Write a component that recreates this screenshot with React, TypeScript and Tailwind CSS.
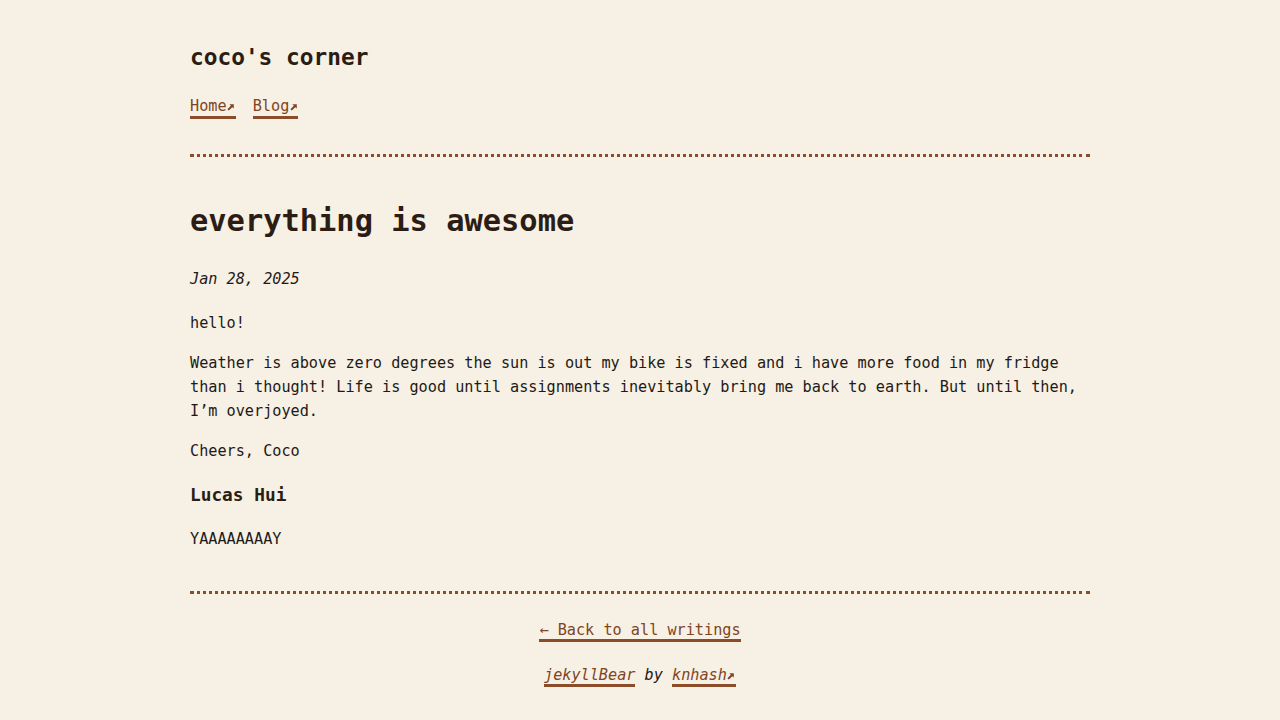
import type { ReactNode } from "react";

const mono = "font-['DejaVu_Sans_Mono','Liberation_Mono',monospace]";

function Arrow() {
  // small north-east arrow, sized to one character cell
  return (
    <span className="inline-block w-[1ch] text-center align-baseline">
      <svg viewBox="0 0 10 10" className="inline-block h-[8px] w-[8px]" fill="currentColor">
        <path d="M3 1.5h5.5V7L6.6 5.2 2.3 9.5 0.5 7.7 4.8 3.4z" />
      </svg>
    </span>
  );
}

function Link({
  children,
  external,
  italic,
  className = "",
}: {
  children: ReactNode;
  external?: boolean;
  italic?: boolean;
  className?: string;
}) {
  return (
    <a
      href="#"
      className={`border-b-[3px] border-[#8b4c2a] text-[#7e4523] no-underline ${italic ? "italic" : ""} ${className}`}
    >
      {children}
      {external ? <Arrow /> : null}
    </a>
  );
}

export default function App() {
  return (
    <div className={`min-h-screen bg-[#f7f0e4] text-[15.2px] leading-[24px] text-[#1d1a17] ${mono}`}>
      <div className="mx-auto w-[900px] pt-[44px] pb-[30px]">
        {/* header */}
        <header>
          <h1 className="text-[22.8px] font-bold leading-[1.2] text-[#2b1d14]">coco's corner</h1>
          <nav className="mt-[25px] flex gap-[17px]">
            <Link external className="leading-[20px]">Home</Link>
            <Link external className="leading-[20px]">Blog</Link>
          </nav>
        </header>

        <div className="mt-[35px] border-t-[3px] border-dotted border-[#8b4c2a]" />

        {/* post */}
        <article className="mt-[46px]">
          <h2 className="text-[30.4px] font-bold leading-[1.2] text-[#2b1d14]">everything is awesome</h2>
          <p className="mt-[27px] italic">Jan 28, 2025</p>
          <p className="mt-[20px]">hello!</p>
          <p className="mt-[16px]">
            Weather is above zero degrees the sun is out my bike is fixed and i have more food in my fridge than i
            thought! Life is good until assignments inevitably bring me back to earth. But until then, I’m overjoyed.
          </p>
          <p className="mt-[16px]">Cheers, Coco</p>
          <h3 className="mt-[21px] text-[17.8px] font-bold leading-[1.2] text-[#2b1d14]">Lucas Hui</h3>
          <p className="mt-[22px]">YAAAAAAAAY</p>
        </article>

        <div className="mt-[40px] border-t-[3px] border-dotted border-[#8b4c2a]" />

        {/* footer */}
        <footer className="mt-[24px] text-center">
          <p>
            <Link>← Back to all writings</Link>
          </p>
          <p className="mt-[21px] italic">
            <Link italic>jekyllBear</Link> by <Link external italic>knhash</Link>
          </p>
        </footer>
      </div>
    </div>
  );
}
